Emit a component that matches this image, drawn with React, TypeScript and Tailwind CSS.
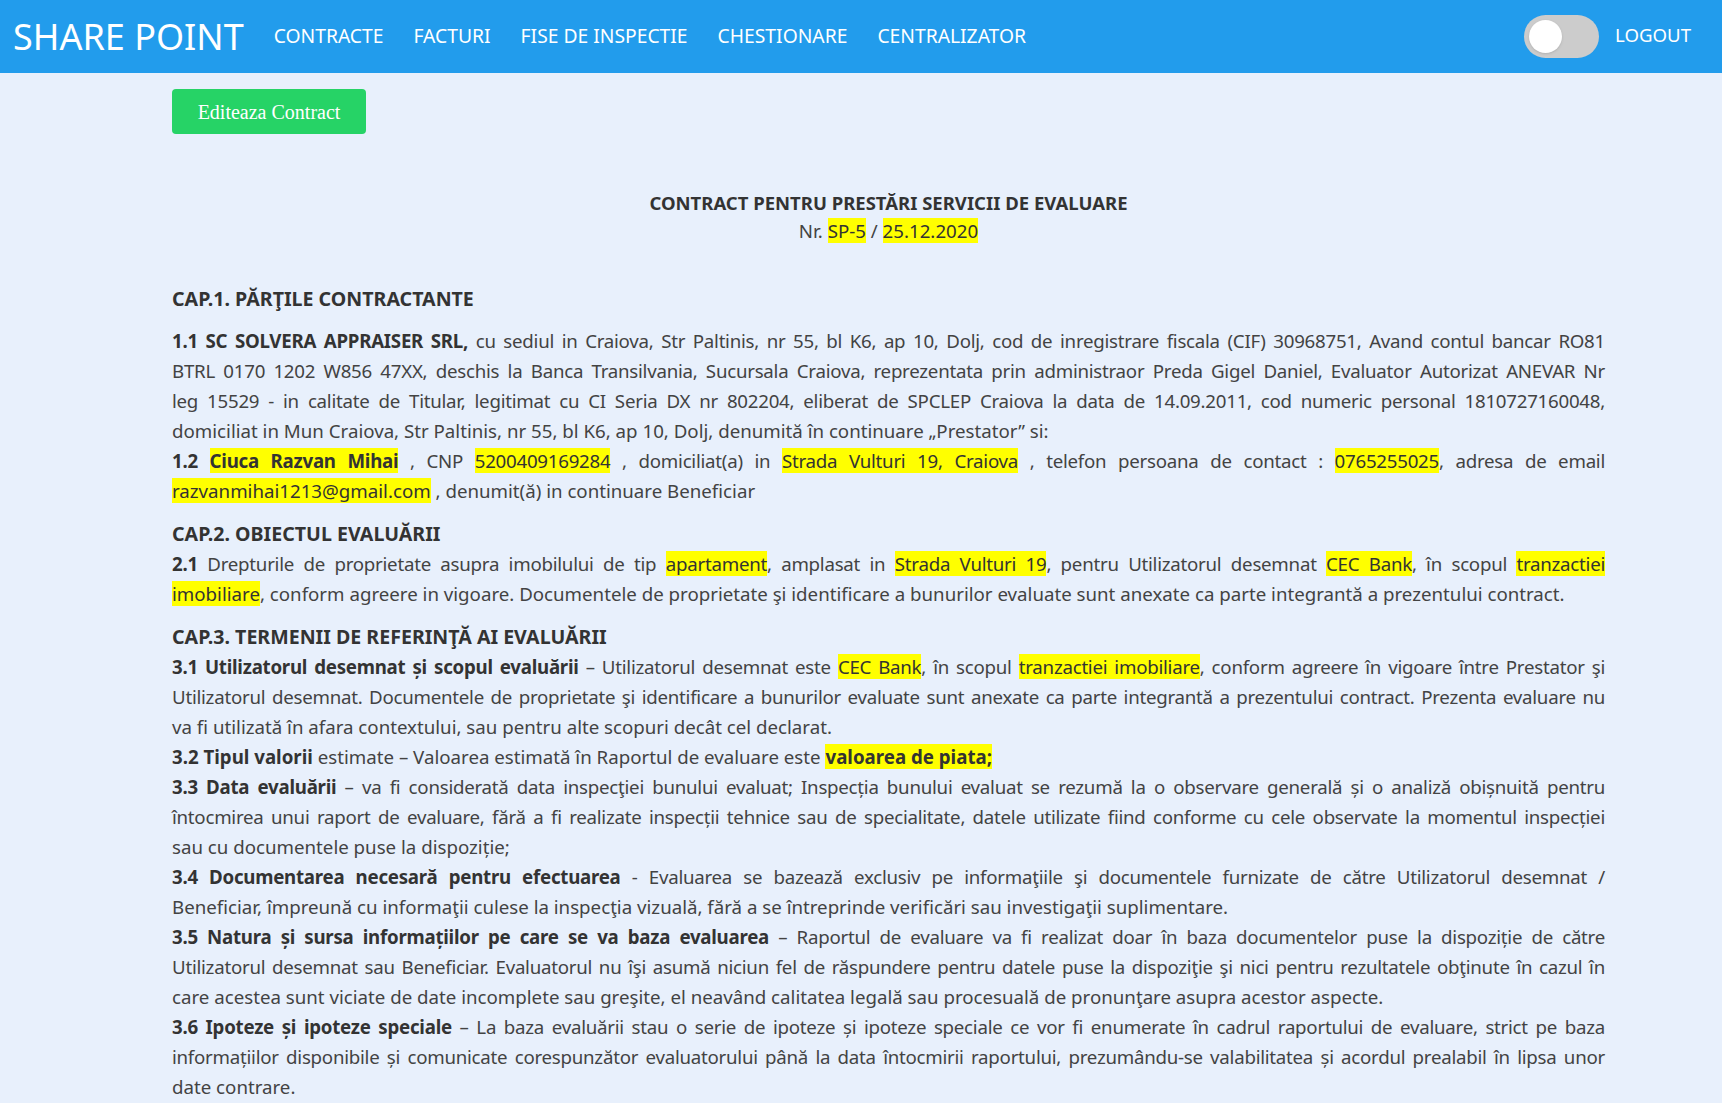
import React from 'react';

const navLinks = ['CONTRACTE', 'FACTURI', 'FISE DE INSPECTIE', 'CHESTIONARE', 'CENTRALIZATOR'];

// one visual line of the contract, justified unless it closes a paragraph
const L: React.FC<{ last?: boolean; children: React.ReactNode }> = ({ last, children }) => (
  <div className={last ? 'text-left' : 'text-justify [text-align-last:justify] tracking-[-0.25px]'}>{children}</div>
);

const H: React.FC<{ children: React.ReactNode }> = ({ children }) => (
  <span className="bg-[#ffff00] text-[#333]">{children}</span>
);

const B: React.FC<{ children: React.ReactNode }> = ({ children }) => (
  <span className="font-bold text-[#333]">{children}</span>
);

export default function App() {
  return (
    <div className="min-h-[1103px] bg-[#e8f0fc] font-['Noto_Sans',sans-serif] font-stretch-semi-condensed">
      {/* Navbar */}
      <nav className="h-[73px] bg-[#229cec] flex items-center pl-[13px] pr-[31px] text-white">
        <div className="text-[36px] leading-none">SHARE POINT</div>
        <ul className="flex items-center gap-[30px] ml-[30px] text-[19.3px]">
          {navLinks.map((l) => (
            <li key={l}>{l}</li>
          ))}
        </ul>
        <div className="ml-auto flex items-center gap-[16px]">
          <div className="w-[75px] h-[43px] rounded-full bg-[#cccccc] flex items-center px-[5px]">
            <div className="w-[33px] h-[33px] rounded-full bg-white shadow-sm"></div>
          </div>
          <span className="text-[18.6px] leading-none pb-[3px]">LOGOUT</span>
        </div>
      </nav>

      <main className="ml-[172px] w-[1433px] text-[18.7px] leading-[30px] text-[#434343]">
        <button className="mt-[16px] w-[194px] h-[45px] rounded-[4px] bg-[#26d366] text-white font-['Liberation_Serif',serif] text-[20px]">
          Editeaza Contract
        </button>

        <div className="mt-[55px] text-center leading-[28px]">
          <div className="font-bold text-[#333] text-[18.5px]">CONTRACT PENTRU PRESTĂRI SERVICII DE EVALUARE</div>
          <div>
            Nr. <H>SP-5</H> / <H>25.12.2020</H>
          </div>
        </div>

        <p className="mt-[39px] mb-[12px] font-bold text-[#333] text-[19.6px]">CAP.1. PĂRŢILE CONTRACTANTE</p>

        <div className="mb-[13px]">
          <L>
            <B>1.1 SC SOLVERA APPRAISER SRL,</B> cu sediul in Craiova, Str Paltinis, nr 55, bl K6, ap 10, Dolj, cod de inregistrare fiscala (CIF) 30968751, Avand contul bancar RO81
          </L>
          <L>
            BTRL 0170 1202 W856 47XX, deschis la Banca Transilvania, Sucursala Craiova, reprezentata prin administraor Preda Gigel Daniel, Evaluator Autorizat ANEVAR Nr
          </L>
          <L>
            leg 15529 - in calitate de Titular, legitimat cu CI Seria DX nr 802204, eliberat de SPCLEP Craiova la data de 14.09.2011, cod numeric personal 1810727160048,
          </L>
          <L last>
            domiciliat in Mun Craiova, Str Paltinis, nr 55, bl K6, ap 10, Dolj, denumită în continuare „Prestator” si:
          </L>
          <L>
            <B>1.2</B> <H><B>Ciuca Razvan Mihai</B></H> , CNP <H>5200409169284</H> , domiciliat(a) in <H>Strada Vulturi 19, Craiova</H> , telefon persoana de contact : <H>0765255025</H>, adresa de email
          </L>
          <L last>
            <H>razvanmihai1213@gmail.com</H> , denumit(ă) in continuare Beneficiar
          </L>
        </div>

        <div className="mb-[13px]">
          <div className="font-bold text-[#333] text-[19.6px]">CAP.2. OBIECTUL EVALUĂRII</div>
          <L>
            <B>2.1</B> Drepturile de proprietate asupra imobilului de tip <H>apartament</H>, amplasat in <H>Strada Vulturi 19</H>, pentru Utilizatorul desemnat <H>CEC Bank</H>, în scopul <H>tranzactiei</H>
          </L>
          <L last>
            <H>imobiliare</H>, conform agreere in vigoare. Documentele de proprietate şi identificare a bunurilor evaluate sunt anexate ca parte integrantă a prezentului contract.
          </L>
        </div>

        <div>
          <div className="font-bold text-[#333] text-[19.6px]">CAP.3. TERMENII DE REFERINŢĂ AI EVALUĂRII</div>
          <L>
            <B>3.1 Utilizatorul desemnat și scopul evaluării</B> – Utilizatorul desemnat este <H>CEC Bank</H>, în scopul <H>tranzactiei imobiliare</H>, conform agreere în vigoare între Prestator şi
          </L>
          <L>
            Utilizatorul desemnat. Documentele de proprietate şi identificare a bunurilor evaluate sunt anexate ca parte integrantă a prezentului contract. Prezenta evaluare nu
          </L>
          <L last>va fi utilizată în afara contextului, sau pentru alte scopuri decât cel declarat.</L>
          <L last>
            <B>3.2 Tipul valorii</B> estimate – Valoarea estimată în Raportul de evaluare este <H><B>valoarea de piata;</B></H>
          </L>
          <L>
            <B>3.3 Data evaluării</B> – va fi considerată data inspecţiei bunului evaluat; Inspecția bunului evaluat se rezumă la o observare generală și o analiză obișnuită pentru
          </L>
          <L>
            întocmirea unui raport de evaluare, fără a fi realizate inspecții tehnice sau de specialitate, datele utilizate fiind conforme cu cele observate la momentul inspecției
          </L>
          <L last>sau cu documentele puse la dispoziție;</L>
          <L>
            <B>3.4 Documentarea necesară pentru efectuarea</B> - Evaluarea se bazează exclusiv pe informaţiile şi documentele furnizate de către Utilizatorul desemnat /
          </L>
          <L last>
            Beneficiar, împreună cu informaţii culese la inspecţia vizuală, fără a se întreprinde verificări sau investigaţii suplimentare.
          </L>
          <L>
            <B>3.5 Natura și sursa informațiilor pe care se va baza evaluarea</B> – Raportul de evaluare va fi realizat doar în baza documentelor puse la dispoziție de către
          </L>
          <L>
            Utilizatorul desemnat sau Beneficiar. Evaluatorul nu îşi asumă niciun fel de răspundere pentru datele puse la dispoziţie şi nici pentru rezultatele obţinute în cazul în
          </L>
          <L last>
            care acestea sunt viciate de date incomplete sau greşite, el neavând calitatea legală sau procesuală de pronunţare asupra acestor aspecte.
          </L>
          <L>
            <B>3.6 Ipoteze și ipoteze speciale</B> – La baza evaluării stau o serie de ipoteze și ipoteze speciale ce vor fi enumerate în cadrul raportului de evaluare, strict pe baza
          </L>
          <L>
            informațiilor disponibile și comunicate corespunzător evaluatorului până la data întocmirii raportului, prezumându-se valabilitatea și acordul prealabil în lipsa unor
          </L>
          <L last>date contrare.</L>
        </div>
      </main>
    </div>
  );
}
